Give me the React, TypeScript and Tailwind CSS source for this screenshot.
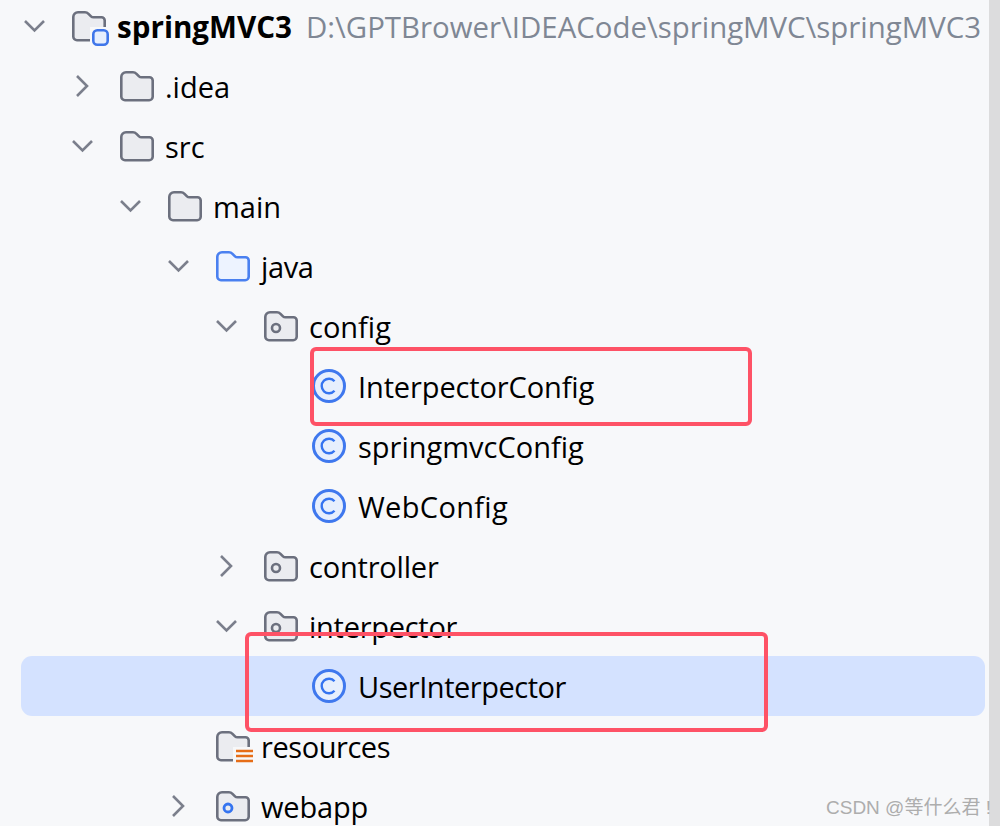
const rows = [
  { indent: 0, chevron: "down", icon: "module", label: "springMVC3", track: "" },
  { indent: 1, chevron: "right", icon: "folder", label: ".idea", track: "" },
  { indent: 1, chevron: "down", icon: "folder", label: "src", track: "" },
  { indent: 2, chevron: "down", icon: "folder", label: "main", track: "" },
  { indent: 3, chevron: "down", icon: "source", label: "java", track: "tracking-[-0.4px]" },
  { indent: 4, chevron: "down", icon: "package", label: "config", track: "" },
  { indent: 5, chevron: "", icon: "class", label: "InterpectorConfig", track: "tracking-[-0.12px]" },
  { indent: 5, chevron: "", icon: "class", label: "springmvcConfig", track: "" },
  { indent: 5, chevron: "", icon: "class", label: "WebConfig", track: "tracking-[0.33px]" },
  { indent: 4, chevron: "right", icon: "package", label: "controller", track: "tracking-[-0.2px]" },
  { indent: 4, chevron: "down", icon: "package", label: "interpector", track: "tracking-[-0.27px]" },
  { indent: 5, chevron: "", icon: "class", label: "UserInterpector", track: "tracking-[-0.47px]", selected: true },
  { indent: 3, chevron: "", icon: "resources", label: "resources", track: "tracking-[-0.44px]" },
  { indent: 3, chevron: "right", icon: "web", label: "webapp", track: "tracking-[-0.17px]" },
];

// the selected row starts at x=21, so these are measured from there
const indents = ["pl-[1px]", "pl-[49px]", "pl-[97px]", "pl-[145px]", "pl-[193px]", "pl-[241px]"];

const folderPath =
  "M1.300 6a4.700 4.700 0 0 1 4.700-4.700h7q2 0 3.500 1.500l2.500 2.500q1 1 2.500 1h8a3.200 3.200 0 0 1 3.200 3.200v16.200a3.500 3.500 0 0 1-3.500 3.500H5a3.700 3.700 0 0 1-3.700-3.700z";

function Chevron({ dir }: { dir: string }) {
  if (!dir) return <span className="w-6 h-6" />;
  return (
    <svg viewBox="0 0 24 24" className="w-6 h-6" fill="none" stroke="#7b7f8c" strokeWidth="2.6">
      {dir === "down" ? <path d="M3 7l9.500 9.500L22 7" /> : <path d="M7 2l10 10-10 10" />}
    </svg>
  );
}

function NodeIcon({ kind }: { kind: string }) {
  if (kind === "class") {
    return (
      <svg viewBox="0 0 34 34" className="w-[34px] h-[34px]">
        <circle cx="17" cy="17" r="15.500" fill="#e7effd" stroke="#3f78ee" strokeWidth="3" />
        <path d="M22.500 12.200a7.300 7.300 0 1 0 0 9.600" fill="none" stroke="#3574f0" strokeWidth="2.400" />
      </svg>
    );
  }
  const source = kind === "source";
  return (
    <svg viewBox="0 0 34 30" className="w-[34px] h-[30px] overflow-visible">
      <path
        d={folderPath}
        fill={source ? "#edf3ff" : "#ebecf0"}
        stroke={source ? "#4a80f0" : "#6c707e"}
        strokeWidth="2.600"
        strokeLinejoin="round"
      />
      {kind === "package" && <circle cx="12" cy="17" r="4" fill="none" stroke="#6c707e" strokeWidth="2.600" />}
      {kind === "web" && <circle cx="12" cy="17" r="4" fill="none" stroke="#3574f0" strokeWidth="2.800" />}
      {kind === "module" && (
        <>
          <rect x="18" y="16" width="20" height="20" fill="#f7f8fa" />
          <rect x="21.300" y="19.300" width="14.400" height="14.400" rx="4" fill="#e7effd" stroke="#3f76ea" strokeWidth="2.600" />
        </>
      )}
      {kind === "resources" && (
        <>
          <rect x="17" y="16" width="22" height="18" fill="#f7f8fa" />
          <path d="M20 20h17M20 25h17M20 30h17" stroke="#e66d17" strokeWidth="2.500" />
        </>
      )}
    </svg>
  );
}

export default function App() {
  return (
    <div className="w-[1000px] h-[826px] overflow-hidden flex bg-[#f7f8fa] font-['Open_Sans','Noto_Sans',sans-serif] text-[29px] text-black relative">
      <div className="flex-1 min-w-0 pl-[21px] pr-[4px] -mt-[4px]">
        {rows.map((row) => (
          <div
            key={row.label}
            className={`h-[60px] flex items-center whitespace-nowrap rounded-[11px] ${indents[row.indent]} ${row.selected ? "bg-[#d4e2ff]" : ""}`}
          >
            <Chevron dir={row.chevron} />
            <div className="ml-[26px] flex items-center">
              <NodeIcon kind={row.icon} />
            </div>
            <span className={`mt-[2px] ${row.track} ${row.icon === "class" ? "ml-[12px]" : "ml-[11px]"} ${row.indent === 0 ? "font-bold text-[29.6px]" : ""}`}>
              {row.label}
            </span>
            {row.indent === 0 && (
              <span className="mt-[2px] ml-[14px] text-[29.4px] text-[#7f8794]">D:\GPTBrower\IDEACode\springMVC\springMVC3</span>
            )}
          </div>
        ))}
      </div>
      <div className="w-[11px] shrink-0 bg-[#dcdcdd]" />

      {/* red annotation boxes drawn over the tree */}
      <div className="absolute left-[310px] top-[347px] w-[442px] h-[79px] border-[4px] border-[#fe5266] rounded-[6px]" />
      <div className="absolute left-[245px] top-[632px] w-[523px] h-[100px] border-[4px] border-[#fe5266] rounded-[6px]" />
      <span className="absolute left-[826px] top-[795px] text-[19px] leading-[26px] whitespace-nowrap text-[#adadad] font-['Liberation_Sans','Noto_Sans_CJK_SC',sans-serif]">CSDN @等什么君 !</span>
    </div>
  );
}
